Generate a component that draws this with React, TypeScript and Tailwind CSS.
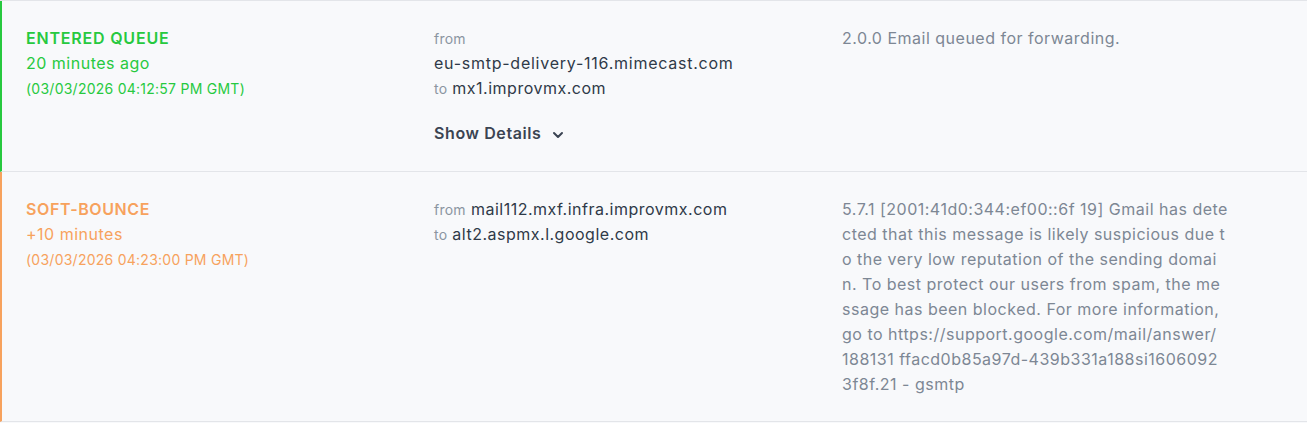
const font = { fontFamily: "Inter, 'Noto Sans', sans-serif" };

const bounceLines = [
  "5.7.1 [2001:41d0:344:ef00::6f 19] Gmail has dete",
  "cted that this message is likely suspicious due t",
  "o the very low reputation of the sending domai",
  "n. To best protect our users from spam, the me",
  "ssage has been blocked. For more information,",
  "go to https://support.google.com/mail/answer/",
  "188131 ffacd0b85a97d-439b331a188si1606092",
  "3f8f.21 - gsmtp",
];

function Chevron() {
  return (
    <svg width="12" height="12" viewBox="0 0 12 12" className="ml-[11px] mt-[2px]">
      <path d="M2 4 L6 8 L10 4" fill="none" stroke="#3b4452" strokeWidth="2" strokeLinecap="round" strokeLinejoin="round" />
    </svg>
  );
}

export default function App() {
  return (
    <div className="h-[423px] w-[1307px] bg-[#f8f9fb] text-[16px] leading-[25px] tracking-[0.5px]" style={font}>
      <div className="border-t border-[#e3e5e9]" />
      {/* entered queue */}
      <div className="flex border-l-2 border-[#27c93f] border-b border-b-[#e3e5e9] pb-[25px] pl-6 pt-[25px]">
        <div className="w-[408px]">
          <div className="font-semibold tracking-[0.8px] text-[#27c93f]">ENTERED QUEUE</div>
          <div className="text-[#27c93f]">20 minutes ago</div>
          <div className="text-[14px] tracking-[0.25px] text-[#27c93f]">(03/03/2026 04:12:57 PM GMT)</div>
        </div>
        <div className="w-[408px]">
          <div className="text-[14px] tracking-[0.25px] text-[#8b95a1]">from</div>
          <div className="tracking-[0.75px] text-[#2f3a48]">eu-smtp-delivery-116.mimecast.com</div>
          <div className="text-[#2f3a48]">
            <span className="text-[14px] tracking-[0.25px] text-[#8b95a1]">to</span> mx1.improvmx.com
          </div>
          <button className="mt-5 flex items-center font-semibold tracking-[0.6px] text-[#3b4452]">
            Show Details
            <Chevron />
          </button>
        </div>
        <div className="w-[392px] text-[#7d8794]">2.0.0 Email queued for forwarding.</div>
      </div>
      {/* soft bounce */}
      <div className="flex border-l-2 border-[#f7a25d] border-b border-b-[#e3e5e9] pb-6 pl-6 pt-[25px]">
        <div className="w-[408px]">
          <div className="font-semibold tracking-[0.6px] text-[#f7a25d]">SOFT-BOUNCE</div>
          <div className="text-[#f7a25d]">+10 minutes</div>
          <div className="text-[14px] tracking-[0.25px] text-[#f7a25d]">(03/03/2026 04:23:00 PM GMT)</div>
        </div>
        <div className="w-[408px] text-[#2f3a48]">
          <div>
            <span className="text-[14px] tracking-[0.25px] text-[#8b95a1]">from</span> mail112.mxf.infra.improvmx.com
          </div>
          <div>
            <span className="text-[14px] tracking-[0.25px] text-[#8b95a1]">to</span> alt2.aspmx.l.google.com
          </div>
        </div>
        <div className="w-[400px] text-[#7d8794]">
          {bounceLines.map((l) => (
            <div key={l} className="whitespace-nowrap">{l}</div>
          ))}
        </div>
      </div>
    </div>
  );
}
